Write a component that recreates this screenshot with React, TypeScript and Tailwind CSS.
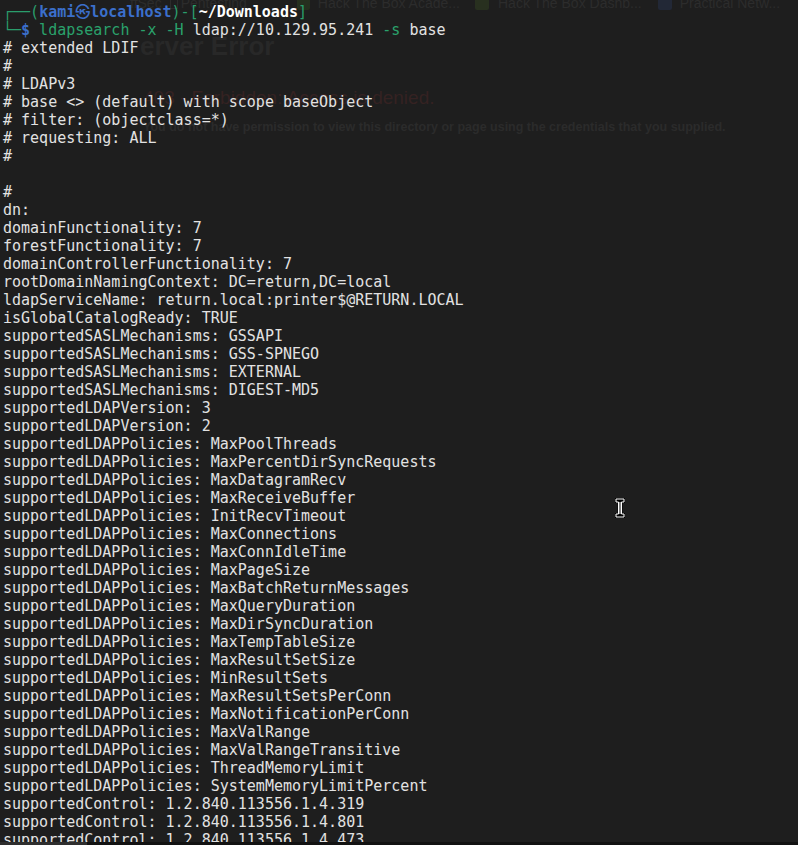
const policies = [
  "MaxPoolThreads",
  "MaxPercentDirSyncRequests",
  "MaxDatagramRecv",
  "MaxReceiveBuffer",
  "InitRecvTimeout",
  "MaxConnections",
  "MaxConnIdleTime",
  "MaxPageSize",
  "MaxBatchReturnMessages",
  "MaxQueryDuration",
  "MaxDirSyncDuration",
  "MaxTempTableSize",
  "MaxResultSetSize",
  "MinResultSets",
  "MaxResultSetsPerConn",
  "MaxNotificationPerConn",
  "MaxValRange",
  "MaxValRangeTransitive",
  "ThreadMemoryLimit",
  "SystemMemoryLimitPercent",
]

const output = [
  "# extended LDIF",
  "#",
  "# LDAPv3",
  "# base <> (default) with scope baseObject",
  "# filter: (objectclass=*)",
  "# requesting: ALL",
  "#",
  "",
  "#",
  "dn:",
  "domainFunctionality: 7",
  "forestFunctionality: 7",
  "domainControllerFunctionality: 7",
  "rootDomainNamingContext: DC=return,DC=local",
  "ldapServiceName: return.local:printer$@RETURN.LOCAL",
  "isGlobalCatalogReady: TRUE",
  "supportedSASLMechanisms: GSSAPI",
  "supportedSASLMechanisms: GSS-SPNEGO",
  "supportedSASLMechanisms: EXTERNAL",
  "supportedSASLMechanisms: DIGEST-MD5",
  "supportedLDAPVersion: 3",
  "supportedLDAPVersion: 2",
  ...policies.map((p) => `supportedLDAPPolicies: ${p}`),
  "supportedControl: 1.2.840.113556.1.4.319",
  "supportedControl: 1.2.840.113556.1.4.801",
  "supportedControl: 1.2.840.113556.1.4.473",
]

function GhostBrowser() {
  // the browser window showing through the translucent terminal
  return (
    <div className="absolute inset-0 pointer-events-none font-['Liberation_Sans',Arial,sans-serif]">
      <div className="absolute top-[-7px] left-0 right-0 flex items-center text-[14px] text-[#2c2c2c] whitespace-nowrap">
        <span className="ml-[130px]">ffSec</span>
        <span className="ml-[8px] w-[8px] h-[10px] border border-[#2c2c2c]" />
        <span className="ml-[3px]">Pentesting</span>
        <span className="ml-[50px] w-[13px] h-[12px] bg-[#26301f] rounded-[2px]" />
        <span className="ml-[8px]">Hack The Box Acade...</span>
        <span className="ml-[15px] w-[14px] h-[13px] bg-[#28301f] rounded-[2px]" />
        <span className="ml-[9px]">Hack The Box Dashb...</span>
        <span className="ml-[16px] w-[14px] h-[12px] bg-[#222836] rounded-[2px]" />
        <span className="ml-[8px]">Practical Netw...</span>
      </div>
      <div className="absolute top-[27px] left-[140px] text-[26px] font-bold text-[#282828] whitespace-nowrap">erver Error</div>
      <div className="absolute top-[84px] left-[143px] text-[19px] text-[#352222] whitespace-nowrap">403 - Forbidden: Access is denied.</div>
      <div className="absolute top-[118px] left-[143px] text-[12.5px] font-bold text-[#2b2b2b] whitespace-nowrap">
        You do not have permission to view this directory or page using the credentials that you supplied.
      </div>
    </div>
  )
}

function Cursor() {
  return (
    <svg className="absolute left-[613px] top-[497px]" width="14" height="22" viewBox="0 0 14 22">
      <path d="M3 2h8v3H8.5v12H11v3H3v-3h2.5V5H3z" fill="#000" stroke="#000" strokeWidth="2" />
      <path d="M3 2h8v3H8.5v12H11v3H3v-3h2.5V5H3z" fill="none" stroke="#fff" strokeWidth="1" />
      <path d="M7 5v12" stroke="#fff" strokeWidth="1" />
    </svg>
  )
}

export default function App() {
  return (
    <main className="relative w-[798px] h-[845px] overflow-hidden bg-[#1e1e1e] flex flex-col">
      <GhostBrowser />
      <div className="relative flex-1 overflow-hidden pt-[3px] pl-[3px] font-['DejaVu_Sans_Mono','Noto_Sans_CJK_SC',monospace] text-[15px] leading-[18px] text-[#e2e2e2] whitespace-pre">
        <div>
          <span className="text-[#2a9d6c]">┌──(</span>
          <span className="text-[#3b6fcb] font-bold">kami㉿localhost</span>
          <span className="text-[#2a9d6c]">)-[</span>
          <span className="text-white font-bold">~/Downloads</span>
          <span className="text-[#2a9d6c]">]</span>
        </div>
        <div>
          <span className="text-[#2a9d6c]">└─</span>
          <span className="text-[#3b6fcb] font-bold">$</span>
          <span className="text-[#2aa26c]"> ldapsearch -x -H </span>
          <span>ldap://10.129.95.241 </span>
          <span className="text-[#2aa26c]">-s </span>
          <span>base</span>
        </div>
        {output.map((line, i) => (
          <div key={i} className="h-[18px]">{line}</div>
        ))}
      </div>
      <div className="relative h-[3px] flex bg-[#121212]">
        <div className="w-[87px] bg-[#2e2e2e]" />
      </div>
      <Cursor />
    </main>
  )
}
